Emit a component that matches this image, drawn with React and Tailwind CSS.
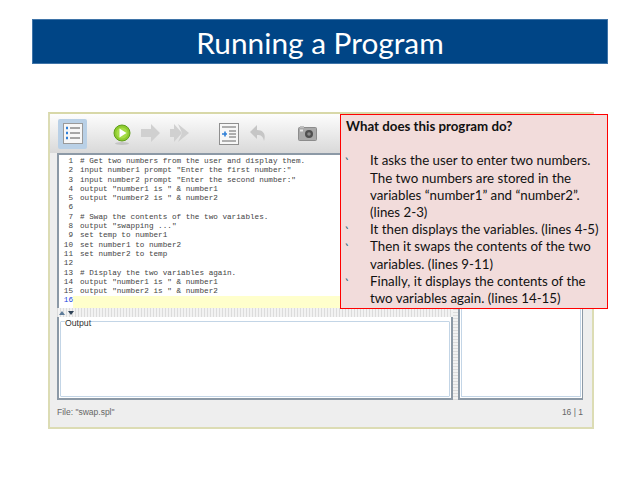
const CODE = [
  '# Get two numbers from the user and display them.',
  'input number1 prompt "Enter the first number:"',
  'input number2 prompt "Enter the second number:"',
  'output "number1 is " & number1',
  'output "number2 is " & number2',
  '',
  '# Swap the contents of the two variables.',
  'output "swapping ..."',
  'set temp to number1',
  'set number1 to number2',
  'set number2 to temp',
  '',
  '# Display the two variables again.',
  'output "number1 is " & number1',
  'output "number2 is " & number2',
  '',
];

const BULLETS = [
  ['It asks the user to enter two numbers.', 'The two numbers are stored in the', 'variables “number1” and “number2”.', '(lines 2-3)'],
  ['It then displays the variables. (lines 4-5)'],
  ['Then it swaps the contents of the two', 'variables. (lines 9-11)'],
  ['Finally, it displays the contents of the', 'two variables again. (lines 14-15)'],
];

function ToolIcon({ w, children }) {
  return (
    <svg width={w} height="24" viewBox={`0 0 ${w} 24`} className="shrink-0">
      {children}
    </svg>
  );
}

function Toolbar() {
  return (
    <div className="flex items-center h-[39px] pl-[8px] bg-gradient-to-b from-[#fdfdfd] to-[#d9d9d9]">
      <div className="flex items-center justify-center w-[29px] h-[30px] bg-[#b9d0e6] rounded-[2px]">
        <svg width="20" height="21" viewBox="0 0 20 21">
          <rect x="0.5" y="0.5" width="19" height="20" fill="#f7f7f7" stroke="#9a9a9a" />
          <path d="M3 5h2M3 10h2M3 15h2" stroke="#2f7fd8" strokeWidth="2.4" />
          <path d="M7 5h10M7 10h10M7 15h10" stroke="#555" strokeWidth="1" />
        </svg>
      </div>
      <div className="ml-[26px]">
        <ToolIcon w={18}>
          <ellipse cx="9" cy="21.5" rx="7" ry="1.5" fill="#c4c4c4" />
          <circle cx="9" cy="11" r="8" fill="#8ecb2e" stroke="#5f9e1a" />
          <circle cx="9" cy="11" r="5.6" fill="#a5dc46" />
          <path d="M6.5 6.5 13.5 11 6.5 15.5Z" fill="#fff" />
        </ToolIcon>
      </div>
      <div className="ml-[10px]">
        <ToolIcon w={20}>
          <path d="M0 7h10V2l9 9-9 9v-5H0Z" fill="#d0d0d0" />
        </ToolIcon>
      </div>
      <div className="ml-[9px]">
        <ToolIcon w={20}>
          <path d="M0 7h4V2l8 9-8 9v-5H0Z" fill="#d0d0d0" />
          <path d="M8 2l11 9-11 9 4-9Z" fill="#d0d0d0" />
        </ToolIcon>
      </div>
      <div className="ml-[29px]">
        <svg width="20" height="22" viewBox="0 0 20 22" className="shrink-0">
          <rect x="0.5" y="0.5" width="19" height="21" fill="#f7f7f7" stroke="#8f8f8f" />
          <path d="M3 4h14M10 8h7M10 11h7M10 14h7M3 18h14" stroke="#666" />
          <path d="M3 11h5M6 8.5v5" stroke="#2f7fd8" strokeWidth="1.6" />
        </svg>
      </div>
      <div className="ml-[10px]">
        <ToolIcon w={18}>
          <path d="M8 3 1 10l7 7v-4c4 0 6 1 7 6 2-6 0-11-7-11Z" fill="#c6c6c6" />
        </ToolIcon>
      </div>
      <div className="ml-[31px]">
        <svg width="19" height="15" viewBox="0 0 19 15" className="shrink-0">
          <rect x="0.5" y="1.5" width="18" height="13" rx="1" fill="#a9a9a9" stroke="#8c8c8c" />
          <rect x="2" y="0" width="4" height="2" fill="#bdbdbd" />
          <circle cx="11" cy="8" r="4" fill="#4f4f4f" />
          <circle cx="11" cy="8" r="1.8" fill="#8a8a8a" />
          <rect x="2" y="3.5" width="3" height="2" fill="#e8e8e8" />
        </svg>
      </div>
    </div>
  );
}

function Editor() {
  return (
    <div className="h-[155px] border-t-[2px] border-l-[2px] border-[#8c99a6] bg-white font-['Liberation_Mono',monospace] text-[7.67px] leading-[9.3px] text-[#444] pt-[2px]">
      {CODE.map((line, i) => (
        <div key={i} className={`flex ${i === 15 ? 'bg-[#ffffcc] h-[13px]' : 'h-[9.3px]'}`}>
          <div className={`w-[14px] shrink-0 text-right bg-white ${i === 15 ? 'text-[#2244dd]' : ''}`}>{i + 1}</div>
          <div className="ml-[7px] whitespace-pre">{line}</div>
        </div>
      ))}
    </div>
  );
}

function Divider() {
  return (
    <div className="flex items-center h-[9px] pl-[2px] bg-[repeating-linear-gradient(90deg,#dcdcdc_0,#dcdcdc_1px,#f2f2f2_1px,#f2f2f2_3px)]">
      <div className="w-0 h-0 border-x-[3px] border-x-transparent border-b-[4px] border-b-[#5d7b99]" />
      <div className="ml-[3px] w-0 h-0 border-x-[3px] border-x-transparent border-t-[4px] border-t-[#2f4358]" />
    </div>
  );
}

function Callout() {
  return (
    <div className="absolute left-[340px] top-[114px] w-[268px] h-[195px] bg-[#f2dcdb] border border-[#ff0000] pl-[5px] pt-[3px] font-['Lato',sans-serif] text-[13.3px] leading-[17.2px] text-[#111]">
      <div className="font-bold">What does this program do?</div>
      <div className="h-[17.2px]" />
      {BULLETS.map((lines, i) => (
        <div key={i} className="flex">
          <div className="w-[24px] shrink-0 text-[#2f6478] text-[9px] font-bold">‵</div>
          <div className="whitespace-nowrap">
            {lines.map((l) => (
              <div key={l}>{l}</div>
            ))}
          </div>
        </div>
      ))}
    </div>
  );
}

export default function App() {
  return (
    <div className="relative w-[640px] h-[480px] bg-white overflow-hidden">
      <div className="pt-[19px] px-[32px]">
        <div className="h-[45px] pt-[3px] flex items-center justify-center bg-[#004586] border border-[#3f74a8] text-white font-['Lato',sans-serif] text-[29.8px]">
          Running a Program
        </div>
      </div>
      <div className="mt-[48px] ml-[48px] w-[546px] h-[317px] border-2 border-[#dcdcb4] border-t-[#d8d8a8] bg-[#eeeeee] flex flex-col">
        <Toolbar />
        <div className="flex flex-1 pl-[7px] pr-[9px]">
          <div className="w-[396px] flex flex-col">
            <Editor />
            <Divider />
            <div className="h-[83px] border-l-[2px] border-b-[2px] border-r-[2px] border-[#8c99a6] bg-white pb-[1px] px-[1px]">
              <fieldset className="h-full border border-[#c3d5e6] rounded-[1px] px-[3px]">
                <legend className="ml-[1px] font-['Liberation_Sans',sans-serif] text-[8.7px] leading-[9px] text-[#333] translate-y-[2px]">
                  Output
                </legend>
              </fieldset>
            </div>
          </div>
          <div className="w-[5px] bg-[repeating-linear-gradient(180deg,#dcdcdc_0,#dcdcdc_1px,#f2f2f2_1px,#f2f2f2_3px)] h-[247px]" />
          <div className="w-[125px] h-[247px] border-l-[2px] border-b-[2px] border-r-[1px] border-[#8c99a6] bg-white px-[1px] pb-[1px]">
            <div className="h-full border border-[#c3d5e6]" />
          </div>
        </div>
        <div className="flex justify-between h-[26px] pl-[7px] pr-[9px] pt-[6px] font-['Liberation_Sans',sans-serif] text-[8.5px] leading-[10px] text-[#666]">
          <span>File: "swap.spl"</span>
          <span>16 | 1</span>
        </div>
      </div>
      <Callout />
    </div>
  );
}
